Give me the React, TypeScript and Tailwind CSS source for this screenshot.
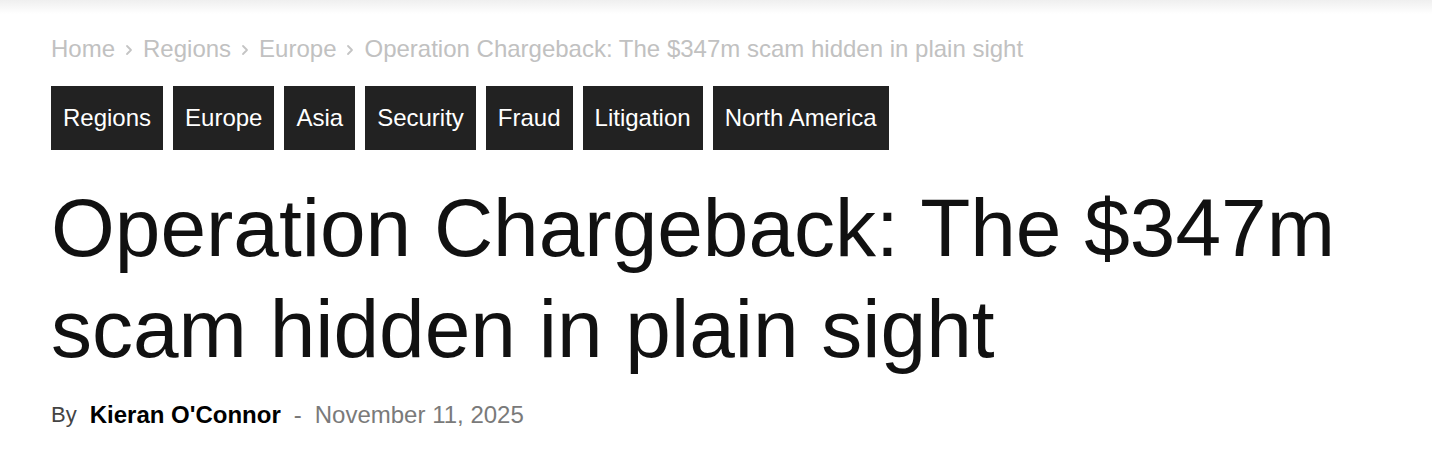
const tags = ["Regions", "Europe", "Asia", "Security", "Fraud", "Litigation", "North America"];

const crumbs = ["Home", "Regions", "Europe", "Operation Chargeback: The $347m scam hidden in plain sight"];

function Chevron() {
  return (
    <svg width="8" height="12" viewBox="0 0 8 12" fill="none" className="mx-[10px] mt-[2px]">
      <path d="M2 2l4 4-4 4" stroke="#c4c4c4" strokeWidth="1.8" strokeLinecap="round" strokeLinejoin="round" />
    </svg>
  );
}

export default function App() {
  return (
    <div className="min-h-[458px] bg-white font-['Liberation_Sans',Arial,sans-serif]">
      {/* shadow from header above */}
      <div className="h-[14px] bg-gradient-to-b from-[#efefef] to-white" />

      <div className="px-[51px]">
        {/* Breadcrumbs */}
        <nav className="mt-[21px] flex items-center text-[24px] leading-[28px] text-[#c1c1c1]">
          {crumbs.map((c, i) => (
            <span key={c} className="flex items-center">
              {i > 0 && <Chevron />}
              <a href="#">{c}</a>
            </span>
          ))}
        </nav>

        {/* Category tags */}
        <div className="mt-[23px] flex gap-[10px]">
          {tags.map((t) => (
            <a key={t} href="#" className="flex h-[64px] items-center bg-[#222] px-3 text-[24px] text-white">
              {t}
            </a>
          ))}
        </div>

        {/* Title */}
        <h1 className="mt-[27px] max-w-[1340px] text-[82px] leading-[101px] text-[#111]">
          Operation Chargeback: The $347m scam hidden in plain sight
        </h1>

        {/* Byline */}
        <div className="mt-[22px] flex items-center text-[24px] leading-[28px]">
          <span className="text-[22px] text-[#444]">By</span>
          <a href="#" className="ml-[13px] font-bold text-black">Kieran O'Connor</a>
          <span className="mx-[13px] text-[#777]">-</span>
          <span className="text-[#7a7a7a]">November 11, 2025</span>
        </div>
      </div>
    </div>
  );
}
